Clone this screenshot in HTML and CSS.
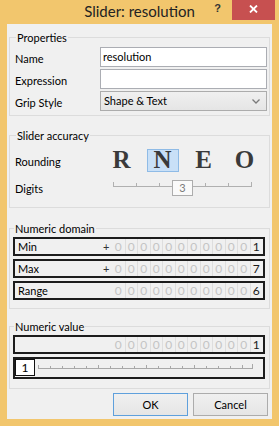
FILE: index.html
```html
<!DOCTYPE html>
<html>
<head>
<meta charset="utf-8">
<link rel="stylesheet" href="styles.css">
</head>
<body>
<div class="window">
  <div class="titlebar">
    <div></div>
    <div class="title">Slider: resolution</div>
    <div class="controls">
      <span class="help">?</span>
      <span class="close"><svg width="9" height="8" viewBox="0 0 9 8"><path d="M1 0.5 L8 7.5 M8 0.5 L1 7.5" stroke="#fff" stroke-width="1.8"/></svg></span>
    </div>
  </div>
  <div class="client">
    <fieldset class="group props">
      <legend>Properties</legend>
      <div class="form">
        <label class="lbl">Name</label>
        <div class="input">resolution</div>
        <label class="lbl">Expression</label>
        <div class="input"></div>
        <label class="lbl">Grip Style</label>
        <div class="select"><span>Shape &amp; Text</span><svg width="8" height="5" viewBox="0 0 8 5"><path d="M0.5 0.5 L4 4 L7.5 0.5" fill="none" stroke="#7a7a7a" stroke-width="1.3"/></svg></div>
      </div>
    </fieldset>

    <fieldset class="group accuracy">
      <legend>Slider accuracy</legend>
      <div class="acc-row">
        <span class="lbl">Rounding</span>
        <div class="letters">
          <span class="letter">R</span>
          <span class="letter"><span class="sel">N</span></span>
          <span class="letter">E</span>
          <span class="letter">O</span>
        </div>
      </div>
      <div class="acc-row digits">
        <span class="lbl">Digits</span>
        <div class="dslider">
          <svg width="141" height="19" viewBox="0 0 141 19">
            <path d="M0.5 8.5 H138.5" stroke="#b0b0b0" stroke-width="1"/>
            <path d="M0.5 4 V9 M23.5 5 V9 M46.5 5 V9 M69.5 5 V9 M92.5 5 V9 M115.5 5 V9 M138.5 4 V9" stroke="#b0b0b0" stroke-width="1"/>
          </svg>
          <span class="dthumb" style="left:59px">3</span>
        </div>
      </div>
    </fieldset>

    <fieldset class="group numeric">
      <legend>Numeric domain</legend>
      <div class="nrow">
        <span class="nlabel">Min</span>
        <span class="sign">+</span>
        <div class="cells"><span>0</span><span>0</span><span>0</span><span>0</span><span>0</span><span>0</span><span>0</span><span>0</span><span>0</span><span>0</span><span>0</span><span class="on">1</span></div>
      </div>
      <div class="nrow">
        <span class="nlabel">Max</span>
        <span class="sign">+</span>
        <div class="cells"><span>0</span><span>0</span><span>0</span><span>0</span><span>0</span><span>0</span><span>0</span><span>0</span><span>0</span><span>0</span><span>0</span><span class="on">7</span></div>
      </div>
      <div class="nrow">
        <span class="nlabel">Range</span>
        <span class="sign"></span>
        <div class="cells"><span>0</span><span>0</span><span>0</span><span>0</span><span>0</span><span>0</span><span>0</span><span>0</span><span>0</span><span>0</span><span>0</span><span class="on">6</span></div>
      </div>
    </fieldset>

    <fieldset class="group numeric value">
      <legend>Numeric value</legend>
      <div class="nrow">
        <span class="nlabel"></span>
        <span class="sign"></span>
        <div class="cells"><span>0</span><span>0</span><span>0</span><span>0</span><span>0</span><span>0</span><span>0</span><span>0</span><span>0</span><span>0</span><span>0</span><span class="on">1</span></div>
      </div>
      <div class="nrow srow">
        <span class="vthumb">1</span>
        <svg class="vtrack" width="222" height="17" viewBox="0 0 222 17">
          <path d="M2 8.5 H217" stroke="#a8a8a8" stroke-width="1"/>
          <path d="M2.5 5 V9 M14.5 6 V9 M26.5 6 V9 M38.5 6 V9 M50.5 6 V9 M62.5 5 V9 M74.5 6 V9 M86.5 6 V9 M98.5 6 V9 M110.5 5 V9 M122.5 6 V9 M134.5 6 V9 M146.5 6 V9 M158.5 5 V9 M170.5 6 V9 M182.5 6 V9 M194.5 6 V9 M206.5 5 V9 M216.5 4 V9" stroke="#a8a8a8" stroke-width="1"/>
        </svg>
      </div>
    </fieldset>

    <div class="buttons">
      <button class="btn ok">OK</button>
      <button class="btn">Cancel</button>
    </div>
  </div>
</div>
</body>
</html>
```

FILE: styles.css
```css
html, body {
  margin: 0;
  padding: 0;
}
body {
  width: 279px;
  height: 426px;
  overflow: hidden;
  font-family: Lato, "Liberation Sans", sans-serif;
  font-size: 11px;
  color: #000;
}
.window {
  width: 279px;
  height: 426px;
  background: #f2c66d;
  display: flex;
  flex-direction: column;
}
.titlebar {
  height: 24px;
  flex: none;
  display: grid;
  grid-template-columns: 1fr auto 1fr;
  align-items: start;
}
.title {
  font-size: 15px;
  line-height: 23px;
  color: #222;
}
.controls {
  display: flex;
  justify-content: flex-end;
  align-items: flex-start;
  padding-right: 4px;
}
.help {
  font-family: "Liberation Sans", sans-serif;
  font-weight: bold;
  font-size: 11px;
  line-height: 14px;
  color: #333;
  margin-right: 11px;
  margin-top: 1px;
}
.close {
  width: 43px;
  height: 20px;
  background: #c75050;
  display: flex;
  align-items: center;
  justify-content: center;
  padding-bottom: 3px;
  box-sizing: border-box;
}
.close svg { display: block; }

.client {
  flex: 1;
  margin: 0 7px 7px 7px;
  background: #f0f0f0;
  display: flex;
  flex-direction: column;
  padding: 0 2px;
}
.group {
  margin: 0;
  border: 1px solid #dcdcdc;
  min-width: 0;
}
.group legend {
  padding: 0 1px;
  margin-left: 1px;
  font-size: 11px;
  line-height: 13px;
}
.props {
  margin-top: 7px;
  padding: 3px 2px 4px 5px;
}
.form {
  display: grid;
  grid-template-columns: 85px 1fr;
  row-gap: 2px;
  align-items: center;
}
.lbl {
  padding-top: 2px;
}
.input {
  height: 20px;
  box-sizing: border-box;
  border: 1px solid #abadb3;
  background: #fff;
  padding: 0 2px;
  line-height: 18px;
}
.select {
  height: 20px;
  box-sizing: border-box;
  border: 1px solid #acacac;
  background: linear-gradient(#f0f0f0, #e5e5e5);
  padding: 0 6px 0 3px;
  line-height: 18px;
  display: flex;
  align-items: center;
  justify-content: space-between;
}

.accuracy {
  margin-top: 13px;
  padding: 6px 2px 10px 5px;
}
.acc-row {
  display: grid;
  grid-template-columns: 86px 1fr;
  align-items: center;
}
.acc-row.digits {
  margin-top: 6px;
  grid-template-columns: 98px 1fr;
}
.letters {
  display: grid;
  grid-template-columns: repeat(4, 41px);
  height: 24px;
}
.letter {
  display: flex;
  justify-content: center;
  align-items: center;
  font-family: "Liberation Serif", serif;
  font-weight: bold;
  font-size: 25px;
  line-height: 24px;
  color: #3a3a3a;
}
.sel {
  width: 32px;
  height: 23px;
  box-sizing: border-box;
  background: #c9e0f7;
  border: 1px solid #8fbbe6;
  display: flex;
  justify-content: center;
  align-items: center;
}
.dslider {
  position: relative;
  height: 19px;
}
.dslider svg { display: block; }
.dthumb {
  position: absolute;
  top: 2px;
  width: 21px;
  height: 16px;
  box-sizing: border-box;
  border: 1px solid #adadad;
  background: #fafafa;
  color: #7a7a7a;
  font-size: 11px;
  line-height: 14px;
  text-align: center;
}

.numeric {
  margin-top: 14px;
  padding: 2px 4px 8px 3px;
  display: flex;
  flex-direction: column;
  gap: 3px;
}
.value {
  margin-top: 11px;
  padding-bottom: 9px;
}
.nrow {
  height: 19px;
  box-sizing: border-box;
  border: 2px solid #1c1c1c;
  display: flex;
  align-items: stretch;
}
.nlabel {
  flex: 1;
  padding-left: 3px;
  line-height: 15px;
}
.sign {
  width: 9px;
  line-height: 15px;
  color: #333;
}
.cells {
  width: 150px;
  margin-right: 1px;
  display: grid;
  grid-template-columns: repeat(12, 1fr);
}
.cells span {
  text-align: center;
  font-size: 12px;
  line-height: 15px;
  color: #c4c4c4;
  border-left: 1px solid #dedede;
}
.cells span:first-child { border-left: none; }
.cells span.on { color: #1a1a1a; }
.srow {
  height: 22px;
  align-items: center;
}
.vthumb {
  width: 20px;
  height: 17px;
  box-sizing: border-box;
  border: 1px solid #111;
  background: #fff;
  font-size: 12px;
  line-height: 15px;
  text-align: center;
  margin-top: -1px;
}
.vtrack {
  display: block;
  margin-left: 1px;
}

.buttons {
  margin-top: 4px;
  display: flex;
  justify-content: flex-end;
  gap: 5px;
  padding-right: 2px;
}
.btn {
  width: 75px;
  height: 23px;
  box-sizing: border-box;
  border: 1px solid #acacac;
  background: linear-gradient(#f0f0f0, #e5e5e5);
  font-family: Lato, "Liberation Sans", sans-serif;
  font-size: 11px;
  color: #000;
  padding: 0;
  margin: 0;
}
.btn.ok {
  border-color: #5fa0dc;
}
```
